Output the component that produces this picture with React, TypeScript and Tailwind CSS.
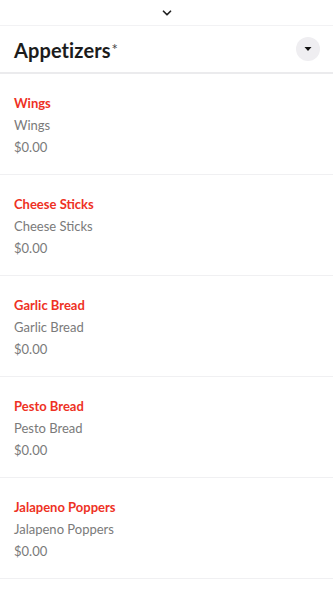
import { ChevronDown } from "lucide-react";

type MenuItem = {
  name: string;
  description: string;
  price: string;
};

const items: MenuItem[] = [
  { name: "Wings", description: "Wings", price: "$0.00" },
  { name: "Cheese Sticks", description: "Cheese Sticks", price: "$0.00" },
  { name: "Garlic Bread", description: "Garlic Bread", price: "$0.00" },
  { name: "Pesto Bread", description: "Pesto Bread", price: "$0.00" },
  { name: "Jalapeno Poppers", description: "Jalapeno Poppers", price: "$0.00" },
];

const MenuRow = ({ item }: { item: MenuItem }) => {
  return (
    <div className="flex flex-col px-[14px] pt-[18px] pb-[16px] border-b border-[#f0f0f2] text-[13px] leading-[22px]">
      <div className="font-bold text-[#ee3124]">{item.name}</div>
      <div className="text-[#7a7a7a]">{item.description}</div>
      <div className="text-[#7a7a7a]">{item.price}</div>
    </div>
  );
};

export default function App() {
  return (
    <div
      className="w-[333px] h-[592px] overflow-hidden bg-white"
      style={{ fontFamily: "Lato, 'Noto Sans', sans-serif" }}
    >
      <div className="flex h-[26px] items-center justify-center border-b border-[#f2f2f4]">
        <ChevronDown className="h-[14px] w-[14px] text-[#222]" strokeWidth={3} />
      </div>
      <div className="flex h-[48px] items-center justify-between pl-[14px] pr-[13px] border-b-2 border-[#ebebed]">
        <h1 className="pt-[1px] text-[20px] font-bold text-[#1c1c1c] tracking-[0.1px]">
          Appetizers
          <span className="ml-[1px] align-[3px] text-[15px] font-normal text-[#444]">*</span>
        </h1>
        <button className="flex h-[24px] w-[24px] items-center justify-center rounded-full bg-[#efeef1]">
          <svg width="8" height="6" viewBox="0 0 8 6">
            <path d="M0.5 1 L7.5 1 L4 5 Z" fill="#111" />
          </svg>
        </button>
      </div>
      <div className="flex flex-col">
        {items.map((item) => (
          <MenuRow key={item.name} item={item} />
        ))}
      </div>
    </div>
  );
}
